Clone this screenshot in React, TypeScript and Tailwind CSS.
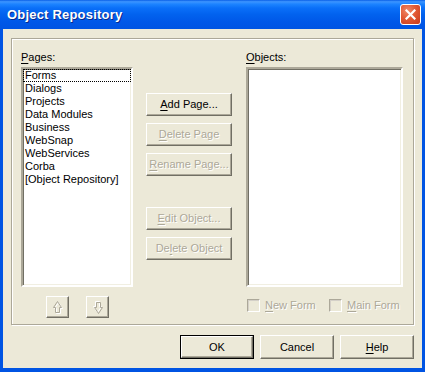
const pages = [
  "Forms",
  "Dialogs",
  "Projects",
  "Data Modules",
  "Business",
  "WebSnap",
  "WebServices",
  "Corba",
  "[Object Repository]",
];

// classic raised 3D button face
const raised =
  "bg-[#ECE9D8] border border-t-white border-l-white border-r-[#716F64] border-b-[#716F64] shadow-[inset_-1px_-1px_0_#ACA899]";
const dim = "text-[#ACA899] [text-shadow:1px_1px_0_#fff]";

function Btn({
  label,
  u,
  disabled,
  className = "",
}: {
  label: string;
  u?: number;
  disabled?: boolean;
  className?: string;
}) {
  const text =
    u === undefined ? (
      label
    ) : (
      <>
        {label.slice(0, u)}
        <span className="underline underline-offset-2">{label[u]}</span>
        {label.slice(u + 1)}
      </>
    );
  return (
    <div
      className={`${raised} flex items-center justify-center whitespace-nowrap ${disabled ? dim : "text-black"} ${className}`}
    >
      {text}
    </div>
  );
}

function ArrowBtn({ down }: { down?: boolean }) {
  return (
    <div className={`${raised} w-[23px] h-[22px] flex items-center justify-center`}>
      <svg width="12" height="15" viewBox="0 0 12 15" className={down ? "rotate-180" : ""}>
        <path d="M1.5 7.5 L5.5 1.5 L9.5 7.5 L7.5 7.5 L7.5 12.5 L3.5 12.5 L3.5 7.5 Z" fill="none" stroke="#fff" strokeWidth="1" transform="translate(1 1)" />
        <path d="M1.5 7.5 L5.5 1.5 L9.5 7.5 L7.5 7.5 L7.5 12.5 L3.5 12.5 L3.5 7.5 Z" fill="none" stroke="#ACA899" strokeWidth="1" />
      </svg>
    </div>
  );
}

function Check({ label, className = "" }: { label: string; className?: string }) {
  return (
    <div className={`flex items-center gap-[5px] whitespace-nowrap ${className}`}>
      <div className="w-[13px] h-[13px] shrink-0 bg-[#ECE9D8] border border-t-[#ACA899] border-l-[#ACA899] border-r-white border-b-white shadow-[inset_1px_1px_0_#D4D0C8]" />
      <span className={dim}>
        <span className="underline underline-offset-2">{label[0]}</span>
        {label.slice(1)}
      </span>
    </div>
  );
}

const sunken =
  "bg-white border-2 border-t-[#ACA899] border-l-[#ACA899] border-r-white border-b-white shadow-[inset_1px_1px_0_#716F64,inset_-1px_-1px_0_#F1EFE2]";

export default function App() {
  return (
    <div
      className="w-[425px] h-[372px] flex flex-col bg-[#0054E3] text-[11px] leading-[13px] text-black overflow-hidden"
      style={{ fontFamily: '"Liberation Sans", Arial, sans-serif' }}
    >
      {/* title bar */}
      <div className="h-[29px] shrink-0 flex items-center justify-between pl-[7px] pr-[4px] bg-[linear-gradient(to_bottom,#0A5FE6_0%,#3D95FF_6%,#1D84FF_14%,#0A6FF8_28%,#0262EE_50%,#0058E8_75%,#0054E3_100%)]">
        <span className="text-white font-bold text-[13px] [text-shadow:1px_1px_0_#0A2A8C] tracking-[0.2px]">
          Object Repository
        </span>
        <div className="w-[21px] h-[21px] rounded-[3px] border border-white bg-[radial-gradient(circle_at_35%_30%,#F08A6A_0%,#E25A35_45%,#C8381A_100%)] flex items-center justify-center">
          <svg width="11" height="11" viewBox="0 0 11 11">
            <path d="M1.5 1.5 L9.5 9.5 M9.5 1.5 L1.5 9.5" stroke="#fff" strokeWidth="2.2" strokeLinecap="square" />
          </svg>
        </div>
      </div>

      {/* body */}
      <div className="flex-1 mx-[3px] mb-[4px] bg-[#ECE9D8] flex flex-col pt-[9px] px-[8px]">
        {/* group box */}
        <div className="h-[287px] border border-[#ACA899] shadow-[inset_1px_1px_0_#fff,1px_1px_0_#fff] flex pl-[9px] pr-[9px] pt-[12px]">
          {/* pages column */}
          <div className="w-[112px] flex flex-col">
            <div className="h-[16px]">
              <span className="underline underline-offset-2">P</span>ages:
            </div>
            <div className={`${sunken} h-[220px] flex flex-col`}>
              {pages.map((p, i) => (
                <div
                  key={p}
                  className={`h-[13px] pl-[2px] whitespace-nowrap ${i === 0 ? "outline outline-1 outline-dotted outline-black -outline-offset-1" : ""}`}
                >
                  {p}
                </div>
              ))}
            </div>
            <div className="flex gap-[17px] pl-[25px] pt-[9px]">
              <ArrowBtn />
              <ArrowBtn down />
            </div>
          </div>

          {/* buttons column */}
          <div className="w-[86px] ml-[13px] mt-[42px] flex flex-col">
            <Btn label="Add Page..." u={0} className="h-[23px]" />
            <Btn label="Delete Page" u={0} disabled className="h-[23px] mt-[7px]" />
            <Btn label="Rename Page..." u={0} disabled className="h-[23px] mt-[7px]" />
            <Btn label="Edit Object..." u={0} disabled className="h-[23px] mt-[31px]" />
            <Btn label="Delete Object" u={2} disabled className="h-[23px] mt-[7px]" />
          </div>

          {/* objects column */}
          <div className="w-[157px] ml-[14px] flex flex-col">
            <div className="h-[16px]">
              <span className="underline underline-offset-2">O</span>bjects:
            </div>
            <div className={`${sunken} h-[220px]`} />
            <div className="flex pl-[1px] pt-[12px]">
              <Check label="New Form" className="w-[82px]" />
              <Check label="Main Form" />
            </div>
          </div>
        </div>

        {/* dialog buttons */}
        <div className="flex justify-end gap-[6px] mt-[10px]">
          <div className="w-[74px] h-[24px] border border-black flex">
            <Btn label="OK" className="flex-1" />
          </div>
          <Btn label="Cancel" className="w-[74px] h-[24px]" />
          <Btn label="Help" u={0} className="w-[74px] h-[24px]" />
        </div>
      </div>
    </div>
  );
}
